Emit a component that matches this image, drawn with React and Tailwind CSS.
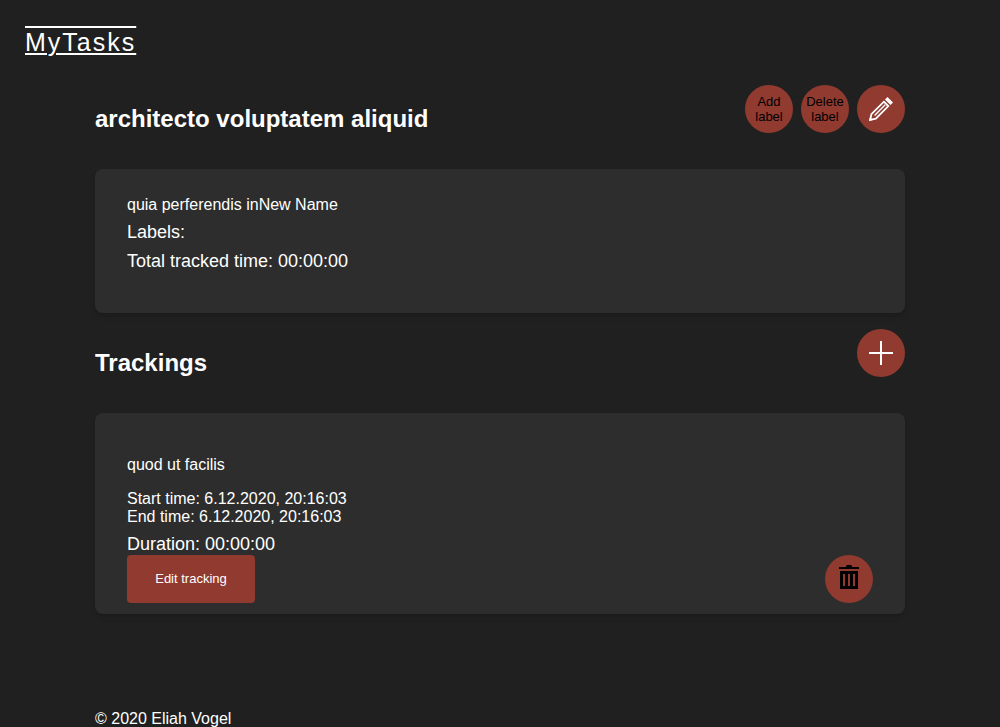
function PencilIcon() {
  return (
    <svg viewBox="0 0 24 24" className="size-6" fill="none" aria-hidden="true">
      <path d="M18.5 0 24 5.5 21.5 8 16 2.5Z" fill="white" />
      <path
        d="M14.9 4.7 19.3 9.1 6.8 21.6 1.2 22.8 2.4 17.2Z"
        stroke="white"
        strokeWidth="1.8"
      />
      <path d="M16.2 7.8 5.6 18.4" stroke="white" strokeWidth="1.4" />
      <path d="M0 24 1 20 4 23Z" fill="white" />
    </svg>
  );
}

function PlusIcon() {
  return (
    <svg viewBox="0 0 24 24" className="size-6" aria-hidden="true">
      <path d="M11 0h2v11h11v2H13v11h-2V13H0v-2h11Z" fill="white" />
    </svg>
  );
}

function TrashIcon() {
  return (
    <svg viewBox="0 0 24 24" className="mb-1 size-6" fill="black" aria-hidden="true">
      <path d="M2 2h7V1l1-1h4l1 1v1h7v2H2Z" />
      <path
        fillRule="evenodd"
        d="M3 6h18v18H3ZM6 9v12h2V9ZM11 9v12h2V9ZM16 9v12h2V9Z"
      />
    </svg>
  );
}

function RoundButton({ label, children }) {
  return (
    <button
      type="button"
      aria-label={label}
      className="flex size-12 shrink-0 items-center justify-center rounded-full bg-[#913a30] text-center text-[13px] leading-[15px] text-black"
    >
      {children}
    </button>
  );
}

function SectionHeader({ title, children }) {
  return (
    <div className="flex items-start justify-between">
      <h2 className="pt-5 text-2xl leading-7 font-bold">{title}</h2>
      <div className="flex gap-2">{children}</div>
    </div>
  );
}

export default function App() {
  return (
    <div className="min-h-screen bg-[#202020] font-['Liberation_Sans',Arial,sans-serif] text-base leading-[18px] text-white">
      <header className="px-[25px] pt-7">
        <a
          href="#"
          className="block w-fit text-[25px] leading-7 tracking-[2px] decoration-2 underline-offset-2 [text-decoration-line:underline_overline]"
        >
          MyTasks
        </a>
      </header>

      <main className="mx-auto w-[81%] pt-[29px]">
        <SectionHeader title="architecto voluptatem aliquid">
          <RoundButton>
            Add
            <br />
            label
          </RoundButton>
          <RoundButton>
            Delete
            <br />
            label
          </RoundButton>
          <RoundButton label="Edit task">
            <PencilIcon />
          </RoundButton>
        </SectionHeader>

        <section className="mt-9 rounded-lg bg-[#2d2d2d] px-8 pt-[27px] pb-[41px] shadow-md">
          <p>quia perferendis inNew Name</p>
          <p className="mt-2 text-lg leading-[21px]">Labels:</p>
          <p className="mt-2 text-lg leading-[21px]">Total tracked time: 00:00:00</p>
        </section>

        <div className="mt-4">
          <SectionHeader title="Trackings">
            <RoundButton label="Add tracking">
              <PlusIcon />
            </RoundButton>
          </SectionHeader>
        </div>

        <section className="mt-9 rounded-lg bg-[#2d2d2d] px-8 pt-[43px] pb-[11px] shadow-md">
          <p>quod ut facilis</p>
          <div className="mt-4">
            <p>Start time: 6.12.2020, 20:16:03</p>
            <p>End time: 6.12.2020, 20:16:03</p>
          </div>
          <p className="mt-2 text-lg leading-[21px]">Duration: 00:00:00</p>
          <div className="flex items-center justify-between">
            <button
              type="button"
              className="h-12 w-32 rounded bg-[#913a30] text-[13px] text-white"
            >
              Edit tracking
            </button>
            <RoundButton label="Delete tracking">
              <TrashIcon />
            </RoundButton>
          </div>
        </section>
      </main>

      <footer className="mx-auto w-[81%] pt-24">
        <p>© 2020 Eliah Vogel</p>
      </footer>
    </div>
  );
}
